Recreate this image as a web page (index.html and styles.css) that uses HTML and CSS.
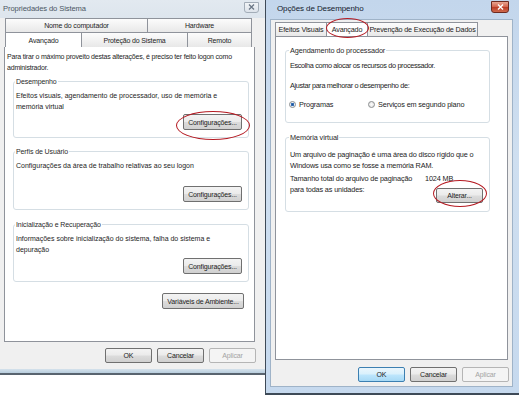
FILE: index.html
```html
<!DOCTYPE html>
<html lang="pt-BR">
<head>
    <meta charset="UTF-8">
    <meta name="viewport" content="width=device-width, initial-scale=1.0">
    <title>Propriedades do Sistema</title>
    <link rel="stylesheet" href="styles.css">
</head>
<body>
<div class="desk">

    <!-- janela de tras -->
    <div class="win win-sys">
        <div class="titlebar">
            <span class="title">Propriedades do Sistema</span>
            <span class="close close-off">
                <svg width="7" height="6" viewBox="0 0 7 6"><path d="M1 0.5 L6 5.5 M6 0.5 L1 5.5" stroke="#6b7786" stroke-width="1.3"/></svg>
            </span>
        </div>
        <div class="tabrow row-back">
            <div class="tab t-nome">Nome do computador</div>
            <div class="tab t-hard">Hardware</div>
        </div>
        <div class="tabrow row-front">
            <div class="tab sel t-avan">Avançado</div>
            <div class="tab t-prot">Proteção do Sistema</div>
            <div class="tab t-rem">Remoto</div>
        </div>
        <div class="panel sys-panel">
            <p class="intro">Para tirar o máximo proveito destas alterações, é preciso ter feito logon como<br>administrador.</p>

            <div class="group g-desemp">
                <div class="legend">Desempenho</div>
                <p class="gtext">Efeitos visuais, agendamento de processador, uso de memória e<br>memória virtual</p>
                <div class="btnrow"><button class="btn b-conf">Configurações...</button></div>
            </div>

            <div class="group g-perfis">
                <div class="legend">Perfis de Usuário</div>
                <p class="gtext">Configurações da área de trabalho relativas ao seu logon</p>
                <div class="btnrow"><button class="btn b-conf">Configurações...</button></div>
            </div>

            <div class="group g-init">
                <div class="legend">Inicialização e Recuperação</div>
                <p class="gtext">Informações sobre inicialização do sistema, falha do sistema e<br>depuração</p>
                <div class="btnrow"><button class="btn b-conf">Configurações...</button></div>
            </div>

            <div class="btnrow env-row"><button class="btn b-env">Variáveis de Ambiente...</button></div>
        </div>
        <div class="foot sys-foot">
            <button class="btn b-foot">OK</button>
            <button class="btn b-foot">Cancelar</button>
            <button class="btn b-foot off">Aplicar</button>
        </div>
        <div class="edge"></div>
    </div>

    <!-- janela da frente -->
    <div class="win win-perf">
        <div class="titlebar perf-title">
            <span class="title">Opções de Desempenho</span>
            <span class="close close-red">
                <svg width="7" height="6" viewBox="0 0 7 6"><path d="M1 0.5 L6 5.5 M6 0.5 L1 5.5" stroke="#fff" stroke-width="1.4"/></svg>
            </span>
        </div>
        <div class="client">
            <div class="tabrow perf-tabs">
                <div class="tab t-efe">Efeitos Visuais</div>
                <div class="tab sel t-avan2">Avançado</div>
                <div class="tab t-prev">Prevenção de Execução de Dados</div>
            </div>
            <div class="panel perf-panel">
                <div class="group g-agend">
                    <div class="legend">Agendamento do processador</div>
                    <p class="ptext p-escolha">Escolha como alocar os recursos do processador.</p>
                    <p class="ptext p-ajustar">Ajustar para melhorar o desempenho de:</p>
                    <div class="radios">
                        <label class="radio r-prog"><span class="dot on"></span>Programas</label>
                        <label class="radio"><span class="dot"></span>Serviços em segundo plano</label>
                    </div>
                </div>

                <div class="group g-mem">
                    <div class="legend">Memória virtual</div>
                    <p class="ptext p-um">Um arquivo de paginação é uma área do disco rígido que o<br>Windows usa como se fosse a memória RAM.</p>
                    <div class="total">
                        <p class="ptext total-lbl">Tamanho total do arquivo de paginação<br>para todas as unidades:</p>
                        <div class="total-val">
                            <span>1024 MB</span>
                            <button class="btn b-alt">Alterar...</button>
                        </div>
                    </div>
                </div>
            </div>
            <div class="foot perf-foot">
                <button class="btn b-foot def">OK</button>
                <button class="btn b-foot">Cancelar</button>
                <button class="btn b-foot off">Aplicar</button>
            </div>
        </div>
    </div>

    <!-- marcas vermelhas -->
    <div class="mark mark-conf"></div>
    <div class="mark mark-tab"></div>
    <div class="mark mark-alt"></div>
</div>
</body>
</html>
```

FILE: styles.css
```css
* {
    box-sizing: border-box;
}
body {
    margin: 0;
    background: #fff;
    font-family: "Liberation Sans", Arial, sans-serif;
    font-size: 7px;
    color: #1c1c1c;
}
p {
    margin: 0;
}
.desk {
    position: relative;
    width: 519px;
    height: 395px;
    overflow: hidden;
}

/* janelas */
.win {
    position: absolute;
    top: 0;
    display: flex;
    flex-direction: column;
}
.win-sys {
    left: 0;
    width: 265px;
    height: 375px;
    background: #f0f0f0;
    border-bottom: 2px solid #59646f;
}
.win-perf {
    left: 265px;
    width: 254px;
    height: 395px;
    background: linear-gradient(#c3d6ec, #cfdff0 40%, #c6d9ee);
    border-left: 1px solid #3e4a57;
    border-bottom: 2px solid #3e4a57;
    padding: 0 7px 7px 5px;
}

.titlebar {
    height: 18px;
    display: flex;
    align-items: center;
    justify-content: space-between;
    padding: 0 6px 0 3px;
    background: linear-gradient(#e2e9f0, #dde5ed);
}
.title {
    font-size: 7.6px;
    color: #4b5663;
    letter-spacing: -0.1px;
    margin-top: -2px;
}
.perf-title {
    height: 20px;
    padding: 0 3px 0 6px;
    background: none;
}
.perf-title .title {
    font-size: 8px;
    color: #14202c;
    margin-top: -3px;
}
.close {
    display: flex;
    align-items: center;
    justify-content: center;
    border-radius: 0 0 3px 3px;
    margin-top: -4px;
}
.close-off {
    width: 15px;
    height: 11px;
    border: 1px solid #a3adb8;
    background: linear-gradient(#f1f4f7, #dde3ea);
}
.close-red {
    width: 18px;
    height: 12px;
    border: 1px solid #6e2a20;
    background: linear-gradient(#e9a592, #d2614a 50%, #b93a25 51%, #cf6a4d);
    margin-top: -7px;
}

/* abas */
.tabrow {
    display: flex;
    padding-left: 5px;
}
.row-back {
    height: 14px;
}
.row-front {
    height: 15px;
}
.tab {
    border: 1px solid #8f939b;
    border-bottom: none;
    background: linear-gradient(#fcfcfc, #e8e8e8);
    display: flex;
    align-items: center;
    justify-content: center;
    white-space: nowrap;
    letter-spacing: -0.15px;
}
.tab + .tab {
    border-left: none;
}
.tab.sel {
    background: #fff;
}
.t-nome { width: 143px; }
.t-hard { width: 104px; }
.t-avan { width: 77px; }
.t-prot { width: 106px; }
.t-rem { width: 64px; }

.panel {
    background: #fff;
    border: 1px solid #8f939b;
    display: flex;
    flex-direction: column;
}
.sys-panel {
    width: 251px;
    height: 295px;
    margin-left: 4px;
    border-top: none;
    padding: 4px 4px 0 2px;
}
.intro,
.gtext {
    line-height: 11px;
    letter-spacing: -0.2px;
    white-space: nowrap;
}
.gtext {
    letter-spacing: 0;
}

/* caixas de grupo */
.group {
    border: 1px solid #d5dee4;
    border-radius: 3px;
    display: flex;
    flex-direction: column;
}
.legend {
    width: fit-content;
    line-height: 11px;
    margin: -6px 0 0 -1px;
    padding: 0 1px;
    background: #fff;
    color: #2a2a2a;
    letter-spacing: -0.1px;
}
.sys-panel .group {
    margin-left: 6px;
    width: 236px;
    padding: 0 6px 7px 2px;
}
.sys-panel .gtext {
    margin-top: 3px;
}
.g-desemp { margin-top: 8px; }
.g-desemp .btnrow { margin-top: 2px; }
.g-perfis { margin-top: 13px; }
.g-perfis .btnrow { margin-top: 15px; }
.g-perfis { padding-bottom: 6px; }
.g-init { margin-top: 14px; }
.g-init .btnrow { margin-top: 3px; }

.btnrow {
    display: flex;
    justify-content: flex-end;
}
.env-row {
    margin: 11px 6px 0 0;
}

/* botoes */
.btn {
    height: 16px;
    padding: 0;
    border: 1px solid #707070;
    border-radius: 2px;
    background: linear-gradient(#f3f3f3, #ebebeb 48%, #dcdcdc 52%, #d0d0d0);
    font-family: "Liberation Sans", Arial, sans-serif;
    font-size: 7px;
    letter-spacing: -0.15px;
    color: #1c1c1c;
    display: flex;
    align-items: center;
    justify-content: center;
}
.b-conf { width: 59px; }
.b-env { width: 82px; }
.b-foot {
    width: 47px;
    height: 15px;
}
.b-foot.off {
    color: #a3a3a3;
    border-color: #b5b5b5;
    background: #f4f4f4;
}
.b-foot.def {
    border-color: #3c7fb1;
    background: linear-gradient(#eaf6fd, #d9f0fc 48%, #bee6fd 52%, #a7d9f5);
}

.foot {
    display: flex;
    justify-content: flex-end;
    gap: 5px;
}
.sys-foot {
    padding: 6px 9px 0 0;
    flex: 1;
}
.edge {
    height: 4px;
    background: linear-gradient(#d5e2ec, #b8cddd);
}

/* janela de desempenho */
.client {
    flex: 1;
    background: #f0f0f0;
    box-shadow: 0 0 0 1px #9fb3c8;
    padding: 2px 4px 0;
    display: flex;
    flex-direction: column;
}
.perf-tabs {
    height: 14px;
    padding-left: 0;
    font-size: 7.2px;
}
.t-efe { width: 52px; }
.t-avan2 { width: 41px; }
.t-prev { width: 110px; }
.perf-panel {
    height: 324px;
    font-size: 7.3px;
}
.perf-panel .group {
    margin-left: 9px;
    width: 205px;
    padding: 0 6px 0 4px;
}
.ptext {
    line-height: 11px;
    letter-spacing: -0.15px;
    white-space: nowrap;
}
.g-agend {
    margin-top: 13px;
    padding-bottom: 12px !important;
}
.p-escolha { margin-top: 4px; letter-spacing: -0.35px; }
.p-ajustar { margin-top: 9px; letter-spacing: -0.35px; }
.radios {
    display: flex;
    margin-top: 8px;
    line-height: 11px;
}
.radio {
    display: flex;
    align-items: center;
    letter-spacing: -0.15px;
}
.r-prog {
    width: 79px;
}
.dot {
    width: 7px;
    height: 7px;
    margin: 0 3px 0 -1px;
    border: 1px solid #8b8e90;
    border-radius: 50%;
    background: radial-gradient(#fdfdfd, #dcdcdc);
}
.dot.on {
    background: radial-gradient(circle, #1f4f8e 0, #3e7ac3 1.6px, #e8eef5 2px);
}
.g-mem {
    margin-top: 14px;
    padding-bottom: 8px !important;
}
.p-um { margin-top: 6px; }
.total {
    display: flex;
    margin-top: 2px;
}
.total-lbl {
    width: 135px;
}
.total-val {
    flex: 1;
    display: flex;
    flex-direction: column;
    align-items: flex-end;
    line-height: 11px;
}
.total-val span {
    align-self: flex-start;
    letter-spacing: -0.15px;
}
.b-alt {
    width: 47px;
    height: 15px;
    margin-top: 4px;
}
.perf-foot {
    padding: 7px 0 0;
    margin-right: -1px;
}

/* circulos vermelhos */
.mark {
    position: absolute;
    border: 1.5px solid #b51a22;
    border-radius: 50%;
}
.mark-conf {
    left: 176px;
    top: 111px;
    width: 74px;
    height: 29px;
}
.mark-tab {
    left: 326px;
    top: 18px;
    width: 43px;
    height: 20px;
}
.mark-alt {
    left: 433px;
    top: 180px;
    width: 54px;
    height: 27px;
}
```
